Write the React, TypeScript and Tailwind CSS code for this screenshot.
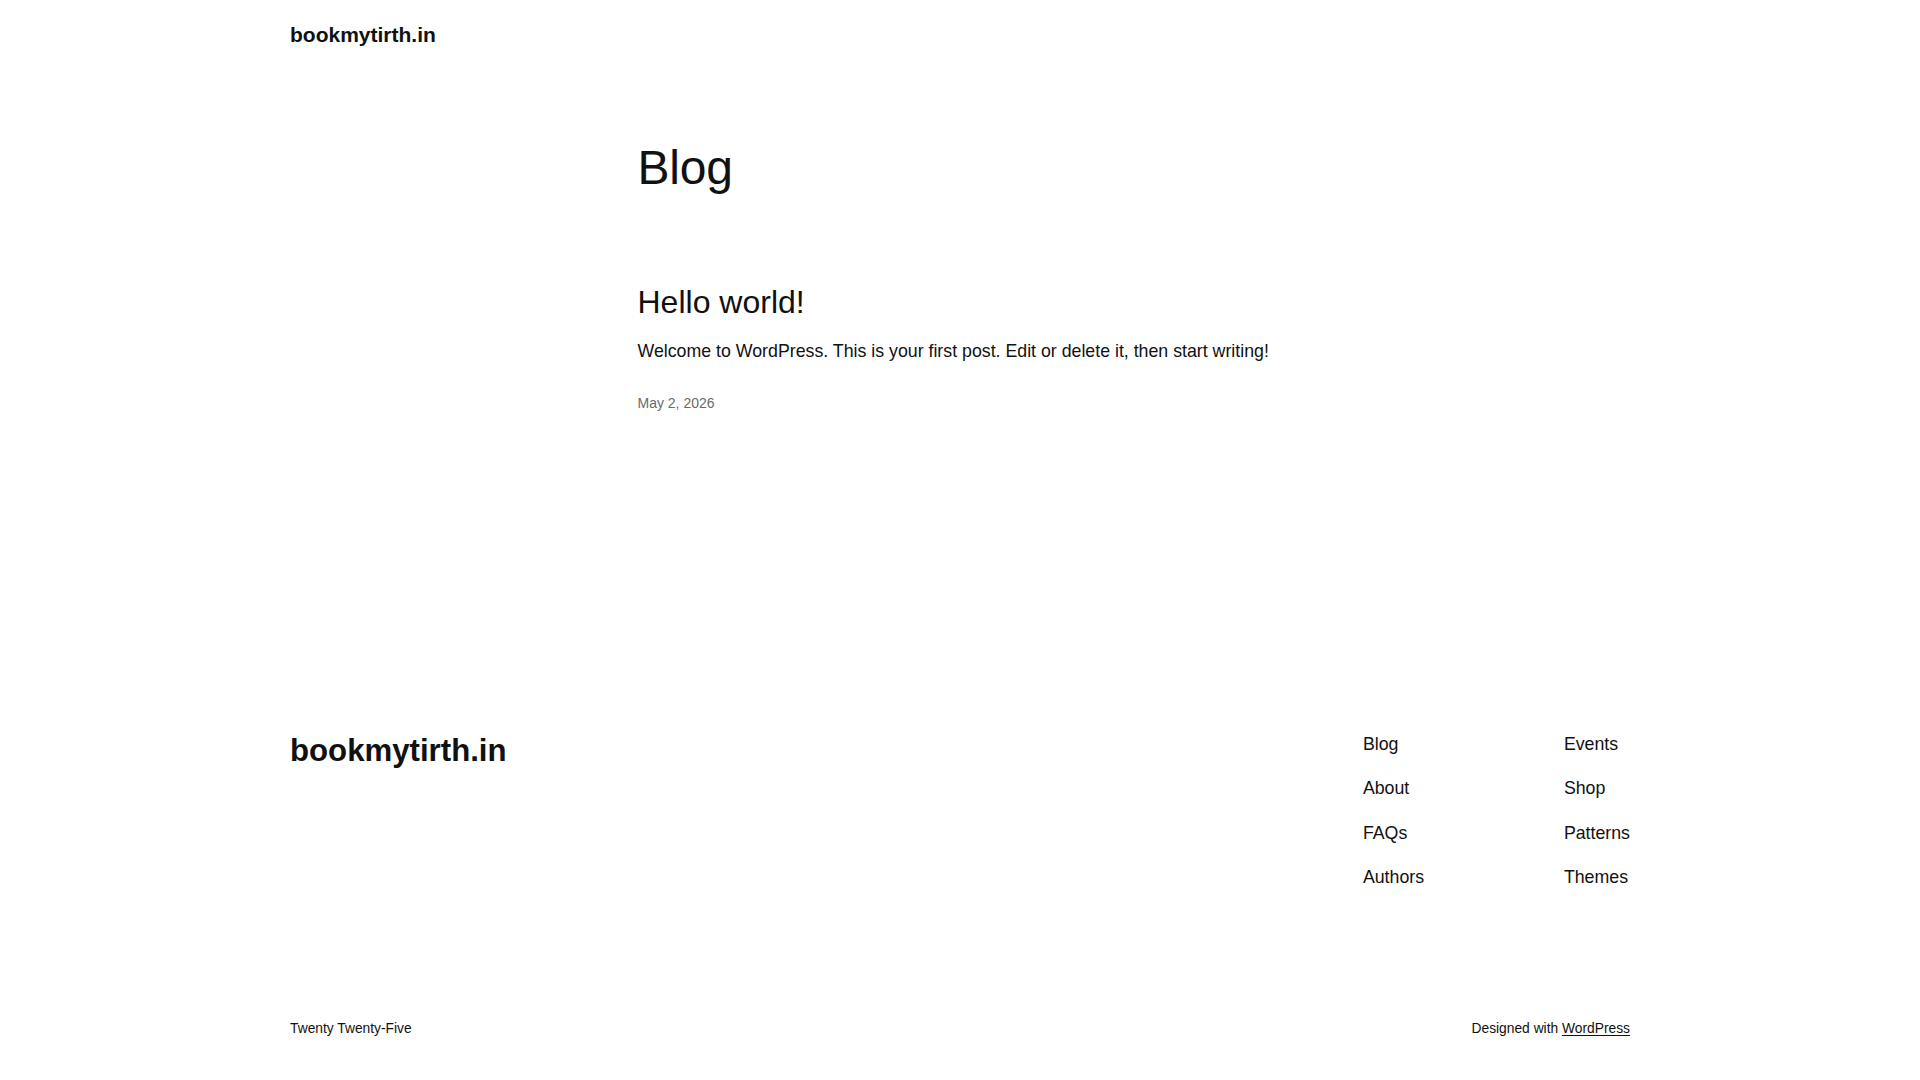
const NAV_LEFT = ["Blog", "About", "FAQs", "Authors"];
const NAV_RIGHT = ["Events", "Shop", "Patterns", "Themes"];

function SiteTitle({ size }: { size: "sm" | "lg" }) {
  return (
    <a
      href="#"
      className={
        size === "sm"
          ? "text-[21px] font-bold leading-[28px] text-[#111111]"
          : "text-[31.2px] font-bold leading-[36px] text-[#111111]"
      }
    >
      bookmytirth.in
    </a>
  );
}

function NavColumn({ items, className }: { items: string[]; className?: string }) {
  return (
    <ul className={"flex flex-col gap-[16.2px] " + (className ?? "")}>
      {items.map((item) => (
        <li key={item}>
          <a href="#" className="text-[17.76px] leading-[28px] text-[#111111]">
            {item}
          </a>
        </li>
      ))}
    </ul>
  );
}

export default function App() {
  return (
    <div className="min-h-screen bg-white font-['Liberation_Sans',Arial,sans-serif] text-[#111111]">
      <header className="mx-auto w-[1340px] pt-[21px] pb-[19px]">
        <SiteTitle size="sm" />
      </header>

      <main className="mx-auto w-[645px] pt-[71px]">
        <h1 className="text-[48px] leading-[57.6px] tracking-[-0.25px]">Blog</h1>

        <article className="pt-[86px]">
          <h2 className="text-[32px] leading-[38.4px]">
            <a href="#">Hello world!</a>
          </h2>
          <p className="pt-[16px] text-[17.76px] leading-[28.8px]">
            Welcome to WordPress. This is your first post. Edit or delete it, then start writing!
          </p>
          <p className="pt-[26px] text-[14px] leading-[22.4px] text-[#6b6b6b]">May 2, 2026</p>
        </article>
      </main>

      <footer className="mx-auto w-[1340px] pt-[316px] pb-[40px]">
        <div className="flex items-start justify-between">
          <div className="pt-[3px]">
            <SiteTitle size="lg" />
          </div>
          <div className="flex">
            <NavColumn items={NAV_LEFT} className="w-[201px]" />
            <NavColumn items={NAV_RIGHT} />
          </div>
        </div>

        <div className="flex items-center justify-between pt-[127px] text-[13.8px] leading-[22.4px]">
          <span>Twenty Twenty-Five</span>
          <span>
            Designed with{" "}
            <a href="#" className="underline underline-offset-2">
              WordPress
            </a>
          </span>
        </div>
      </footer>
    </div>
  );
}
